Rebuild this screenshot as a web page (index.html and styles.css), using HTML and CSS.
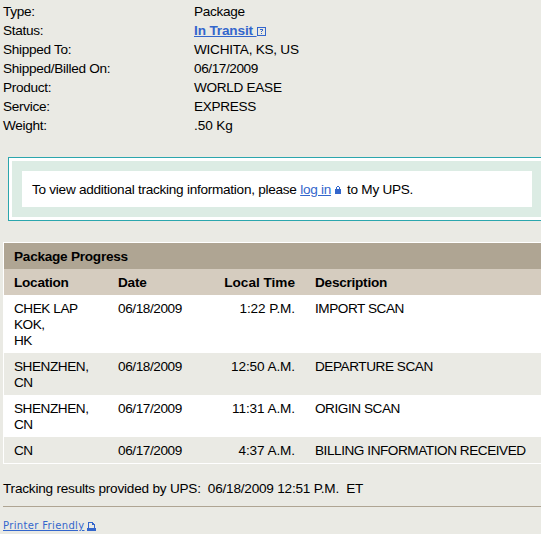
FILE: index.html
```
<!DOCTYPE html>
<html lang="en">
<head>
<meta charset="utf-8">
<title>Tracking Detail</title>
<link rel="stylesheet" href="styles.css">
</head>
<body>
<dl class="summary">
<dt>Type:</dt><dd>Package</dd>
<dt>Status:</dt><dd><a class="status" href="#">In Transit&nbsp;</a><svg class="help" width="9" height="9" viewBox="0 0 9 9" shape-rendering="crispEdges"><path fill="#36c" fill-rule="evenodd" d="M0 0h9v9H0zM1 1v7h7V1z"/><path fill="#36c" d="M3 2h3v1H3zM5 3h1v1H5zM4 4h1v1H4zM4 6h1v1H4z"/></svg></dd>
<dt>Shipped To:</dt><dd class="dest">WICHITA, KS, US</dd>
<dt>Shipped/Billed On:</dt><dd class="date">06/17/2009</dd>
<dt>Product:</dt><dd class="product">WORLD EASE</dd>
<dt>Service:</dt><dd>EXPRESS</dd>
<dt>Weight:</dt><dd class="weight">.50 Kg</dd>
</dl>
<div class="notice"><div class="notice-frame"><p class="notice-text">To view additional tracking information, please <a href="#">log in</a><svg class="lock" width="6" height="8" viewBox="0 0 6 8" shape-rendering="crispEdges"><path fill="#36c" d="M2 0h2v1H2zM1 1h1v2H1zM4 1h1v2H4zM0 3h6v5H0z"/></svg>to My UPS.</p></div></div>
<table class="progress">
<colgroup><col class="c-loc"><col class="c-date"><col class="c-time"><col class="c-desc"></colgroup>
<thead>
<tr class="title"><th colspan="4">Package Progress</th></tr>
<tr class="heads"><th>Location</th><th>Date</th><th class="time">Local Time</th><th>Description</th></tr>
</thead>
<tbody>
<tr><td>CHEK LAP<br>KOK,<br>HK</td><td class="date">06/18/2009</td><td class="time">1:22 P.M.</td><td>IMPORT SCAN</td></tr>
<tr><td>SHENZHEN,<br>CN</td><td class="date">06/18/2009</td><td class="time">12:50 A.M.</td><td>DEPARTURE SCAN</td></tr>
<tr><td>SHENZHEN,<br>CN</td><td class="date">06/17/2009</td><td class="time">11:31 A.M.</td><td>ORIGIN SCAN</td></tr>
<tr><td>CN</td><td class="date">06/17/2009</td><td class="time">4:37 A.M.</td><td class="long">BILLING INFORMATION RECEIVED</td></tr>
</tbody>
</table>
<p class="results">Tracking results provided by UPS:&nbsp; 06/18/2009 12:51 P.M.&nbsp; ET</p>
<div class="tools"><a href="#">Printer Friendly</a><svg width="9" height="9" viewBox="0 0 9 9" shape-rendering="crispEdges"><path fill="#36c" fill-rule="evenodd" d="M1 0h5v1h1v1h1v4h1v3H0V6h1zM2 1v5h5V3H5V1z"/></svg></div>
</body>
</html>
```
FILE: styles.css
```
* { box-sizing: border-box; }
body {
  margin: 0;
  height: 534px;
  overflow: hidden;
  background: #eaeae4;
  color: #000;
  font: 13.6px/16px "Liberation Sans", Arial, sans-serif;
  letter-spacing: -0.3px;
}
a { color: #36c; text-decoration: underline; }
.summary {
  display: grid;
  grid-template-columns: 191px 1fr;
  grid-auto-rows: 19px;
  line-height: 19px;
  margin: 0;
  padding: 2px 0 0 3px;
}
dd { margin: 0; white-space: nowrap; }
.status { font-weight: bold; letter-spacing: -0.15px; }
.help { vertical-align: -1px; }
.dest { letter-spacing: -0.25px; }
.date { letter-spacing: -0.42px; }
.weight { letter-spacing: -0.1px; }
.notice {
  width: 540px;
  height: 64px;
  margin: 22px 0 0 8px;
  padding: 3px;
  border: 1px solid #2ba6ad;
  background: #fff;
}
.notice-frame { height: 56px; padding: 10px; background: #dcece4; }
.notice-text {
  width: 510px;
  height: 36px;
  margin: 0;
  padding-left: 10px;
  line-height: 37px;
  letter-spacing: -0.27px;
  background: #fff;
  white-space: nowrap;
}
.lock { margin: 0 6px 0 4px; vertical-align: 0; }
.progress {
  width: 545px;
  margin: 21px 0 0 3px;
  table-layout: fixed;
  border-collapse: separate;
  border-spacing: 0;
  border: 1px solid #fff;
}
.c-loc { width: 104px; }
.c-date { width: 94px; }
.c-time { width: 103px; }
th, td {
  padding: 6px 10px 4px;
  text-align: left;
  vertical-align: top;
  white-space: nowrap;
}
td { letter-spacing: -0.45px; }
th { letter-spacing: -0.25px; }
.progress .time { text-align: right; letter-spacing: -0.1px; }
.progress th.time { letter-spacing: 0; }
.title { background: #afa593; }
.heads { background: #d5ccbf; }
tbody tr:nth-child(odd) { background: #fff; }
.results { margin: 17px 0 0 3px; white-space: pre; letter-spacing: -0.22px; }
.tools {
  display: flex;
  align-items: flex-start;
  gap: 2px;
  margin: 9px 0 0 3px;
  padding-top: 11px;
  border-top: 1px solid #afa593;
  font: 10px/16px "DejaVu Sans", Verdana, sans-serif;
  letter-spacing: 0.35px;
}
.tools svg { margin-top: 4px; }
```
